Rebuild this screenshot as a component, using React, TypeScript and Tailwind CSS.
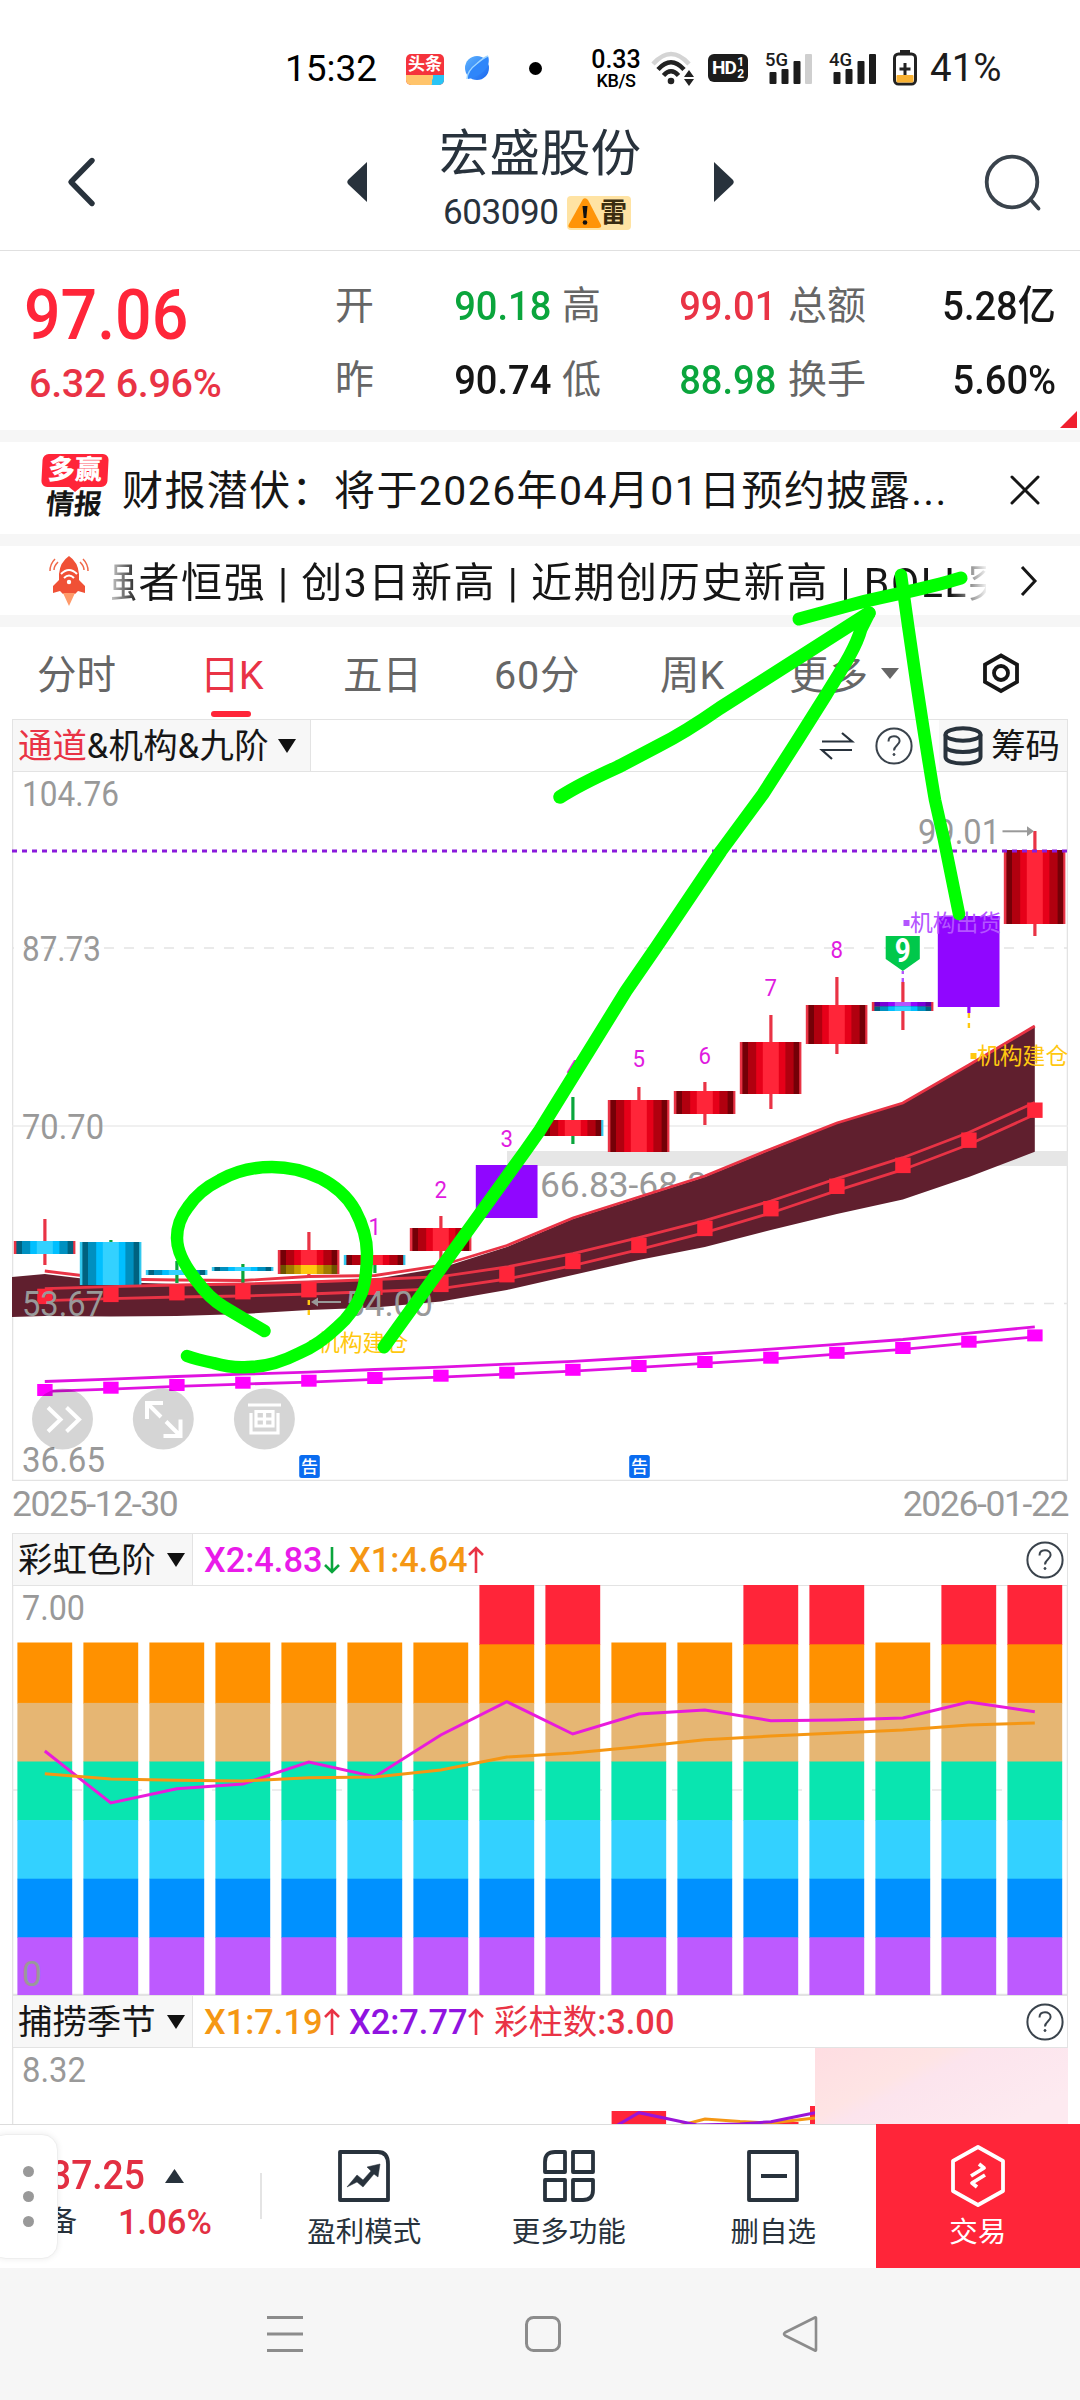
import React from "react";

const X0 = 44.8;
const STEP = 66;
const cx = (i: number) => X0 + STEP * i;
const pts = (ys: number[]) => ys.map((y, i) => `${cx(i)},${y}`).join(" ");

const RED = "#ff2539";
const INK = "#28323c";
const GREEN = "#0aa53c";

const reds = ["#740007", "#b1000f", "#e60019", "#ff2539"];
const cyans = ["#006280", "#0090c0", "#00bfff", "#33d1ff"];
const golds = ["#6e5200", "#a07a00", "#cc9c00", "#ffc810"];
const purples = ["#5a00a0", "#7800d8", "#9006ff", "#b455ff"];

type Candle = {
  top: number;
  bottom: number;
  hi: number;
  lo: number;
  wick: string;
  edge: string;
  shades?: string[];
  lower?: { from: number; shades: string[] };
  solid?: string;
};

const candles: Candle[] = [
  { top: 1241, bottom: 1254, hi: 1219, lo: 1265, wick: "#e93345", edge: "#e93345", shades: cyans },
  { top: 1242, bottom: 1285, hi: 1240, lo: 1285, wick: GREEN, edge: "#33c8ee", shades: cyans },
  { top: 1270, bottom: 1275, hi: 1261, lo: 1283, wick: GREEN, edge: "#33c8ee", shades: cyans },
  { top: 1267, bottom: 1271, hi: 1264, lo: 1283, wick: GREEN, edge: "#33c8ee", shades: cyans },
  { top: 1250, bottom: 1274, hi: 1232, lo: 1278, wick: "#e93345", edge: "#e93345", shades: reds, lower: { from: 1265, shades: golds } },
  { top: 1255, bottom: 1265, hi: 1255, lo: 1273, wick: GREEN, edge: "#33c8ee", shades: reds },
  { top: 1228, bottom: 1251, hi: 1216, lo: 1261, wick: "#e93345", edge: "#e93345", shades: reds },
  { top: 1165, bottom: 1218, hi: 1165, lo: 1218, wick: "#9006ff", edge: "#9006ff", solid: "#9006ff" },
  { top: 1120, bottom: 1136, hi: 1097, lo: 1144, wick: GREEN, edge: "#33c8ee", shades: reds },
  { top: 1100, bottom: 1152, hi: 1087, lo: 1152, wick: "#e93345", edge: "#e93345", shades: reds },
  { top: 1091, bottom: 1114, hi: 1082, lo: 1125, wick: "#e93345", edge: "#e93345", shades: reds },
  { top: 1042, bottom: 1094, hi: 1015, lo: 1109, wick: "#e93345", edge: "#e93345", shades: reds },
  { top: 1005, bottom: 1044, hi: 977, lo: 1054, wick: "#e93345", edge: "#e93345", shades: reds },
  { top: 1002, bottom: 1011, hi: 982, lo: 1030, wick: "#e93345", edge: "#e93345", shades: purples, lower: { from: 1006.5, shades: cyans } },
  { top: 916, bottom: 1007, hi: 916, lo: 1013, wick: "#9006ff", edge: "#9006ff", solid: "#9006ff" },
  { top: 850, bottom: 924, hi: 831, lo: 936, wick: "#e93345", edge: "#e93345", shades: reds },
];

function Shaded({ x, y, h, shades }: { x: number; y: number; h: number; shades: string[] }) {
  const inset = [0, 5.6, 13.8, 20.4];
  return (
    <g>
      {shades.map((c, i) => (
        <rect key={i} x={x - 28.4 + inset[i]} y={y} width={56.8 - inset[i] * 2} height={h} fill={c} />
      ))}
    </g>
  );
}

function CandleMark({ i, c }: { i: number; c: Candle }) {
  const x = cx(i);
  const split = c.lower ? c.lower.from : c.bottom;
  return (
    <g>
      <rect x={x - 1.5} y={c.hi} width={3.2} height={c.lo - c.hi} fill={c.wick} />
      <rect x={x - 31} y={c.top} width={61.6} height={c.bottom - c.top} fill={c.edge} />
      {c.solid && <rect x={x - 30.6} y={c.top} width={61} height={c.bottom - c.top} fill={c.solid} />}
      {c.shades && <Shaded x={x} y={c.top} h={split - c.top} shades={c.shades} />}
      {c.lower && <Shaded x={x} y={c.lower.from} h={c.bottom - c.lower.from} shades={c.lower.shades} />}
    </g>
  );
}

const bandTop = [1274, 1282, 1284, 1285, 1281, 1279, 1268, 1247, 1219, 1198, 1177, 1150, 1123.5, 1103, 1065, 1026];
const bandBottom = [1316, 1316.6, 1316, 1314, 1310, 1307.5, 1301.6, 1290, 1275, 1260, 1247, 1230, 1214, 1199.6, 1177, 1151.7];
const bandLine = [1271, 1279, 1280, 1280.5, 1276.5, 1275.5, 1265.5, 1245.5, 1218, 1197, 1176, 1149, 1123, 1103, 1065, 1026];
const mid = [1296.7, 1294.7, 1293, 1292, 1290, 1287.5, 1284.7, 1275, 1261.7, 1245.7, 1228.7, 1209, 1186.6, 1165.7, 1140.5, 1110.5];
const low = [1390, 1387.7, 1385, 1382.7, 1380.7, 1378, 1375.7, 1372.7, 1369.8, 1366, 1362, 1357.7, 1352.8, 1348, 1341.7, 1335.4];
const counts: [number, string, number][] = [
  [5, "1", 1226.5], [6, "2", 1189], [7, "3", 1138], [8, "4", 1068], [9, "5", 1058.7], [10, "6", 1055], [11, "7", 987.7], [12, "8", 949.5],
];

function Axis({ x, y, w, children }: { x: number; y: number; w: number; children: string }) {
  return (
    <text x={x} y={y + 12.7} fontSize={35.5} fill="#999" textLength={w} lengthAdjust="spacingAndGlyphs">
      {children}
    </text>
  );
}

function CandleChart() {
  return (
    <svg className="block h-[709px] w-[1056px] overflow-hidden" viewBox="12 772 1056 709">
      <path d="M12.5 772V1480.5H1067.5V772" fill="none" stroke="#e3e3e3" strokeWidth={1.6} />
      <path d="M12 948H1068M12 1303.5H1068" stroke="#e4e4e4" strokeWidth={1.4} strokeDasharray="10 10" strokeDashoffset={8} />
      <path d="M12 1126H1068" stroke="#ebebeb" strokeWidth={1.6} />
      <rect x={507} y={1151} width={561} height={15} fill="#e6e6e6" />
      <Axis x={540} y={1184.5} w={187}>66.83-68.38</Axis>

      <polygon points={`12,1277 ${pts(bandTop)} ${[...bandBottom].reverse().map((y, k) => `${cx(15 - k)},${y}`).join(" ")} 12,1317`} fill="#601f2e" />
      <polyline points={pts(bandLine)} fill="none" stroke="#e93345" strokeWidth={2.8} />

      {candles.map((c, i) => (
        <CandleMark key={i} i={i} c={c} />
      ))}

      <polyline points={pts(mid.map((y) => y - 8))} fill="none" stroke="#e93345" strokeWidth={2.8} />
      <polyline points={pts(mid.map((y) => y + 4))} fill="none" stroke="#e93345" strokeWidth={2.8} />
      {mid.map((y, i) => (
        <rect key={i} x={cx(i) - 7.6} y={y - 8} width={15.4} height={15.4} fill={RED} />
      ))}
      <polyline points={pts(low.map((y) => y - 8.5))} fill="none" stroke="#e012e0" strokeWidth={2.8} />
      <polyline points={pts(low.map((y) => y + 1.4))} fill="none" stroke="#e012e0" strokeWidth={2.8} />
      {low.map((y, i) => (
        <rect key={i} x={cx(i) - 7.6} y={y - 6} width={15.4} height={12} fill="#ff00ff" />
      ))}

      <path d="M12 851H1068" stroke="#8a1bdc" strokeWidth={3} strokeDasharray="5 5" />

      <g stroke="#ffc810" strokeWidth={2.4} strokeDasharray="5 5">
        <path d="M308.8 1300V1315M968.9 1013V1028" />
      </g>
      <path d="M902.8 971V974M902.8 978V982" stroke="#b455ff" strokeWidth={2.4} />
      <path d="M885.7 936H919.8V959L902.8 971L885.7 959Z" fill="#00c84b" />
      <text x={902.8} y={962} fontSize={34} fontWeight={700} fill="#fff" textAnchor="middle" textLength={16} lengthAdjust="spacingAndGlyphs">9</text>

      {counts.map(([i, t, y]) => (
        <text key={t} x={cx(i)} y={y + 8.5} fontSize={24} fill="#e01be0" textAnchor="middle" textLength={12.5} lengthAdjust="spacingAndGlyphs">
          {t}
        </text>
      ))}

      <rect x={309.5} y={1340} width={6} height={6} fill="#ffc810" />
      <text x={317} y={1350.5} fontSize={22.8} fill="#ffc810">机构建仓</text>
      <rect x={970.5} y={1053} width={6} height={6} fill="#ffc810" />
      <text x={977} y={1063.5} fontSize={22.8} fill="#ffc810">机构建仓</text>
      <rect x={903.5} y={920} width={6} height={6} fill="#b455ff" />
      <text x={910} y={931} fontSize={22.8} fill="#b455ff">机构出货</text>

      <Axis x={22} y={793.5} w={97}>104.76</Axis>
      <Axis x={22} y={948} w={79}>87.73</Axis>
      <Axis x={22} y={1126} w={82}>70.70</Axis>
      <Axis x={22} y={1303} w={82}>53.67</Axis>
      <Axis x={22} y={1459.5} w={83}>36.65</Axis>
      <Axis x={345} y={1303} w={88}>54.00</Axis>
      <Axis x={918} y={831.5} w={82}>99.01</Axis>
      <g stroke="#999" strokeWidth={2} fill="#999">
        <path d="M316 1302H341" />
        <path d="M311 1302L318 1297.5V1306.5Z" stroke="none" />
        <path d="M1002.5 831.3H1028" />
        <path d="M1034 831.3L1027 826.3V836.3Z" stroke="none" />
      </g>

      <g fill="#000" fillOpacity={0.165}>
        <circle cx={62.5} cy={1419} r={30.5} />
        <circle cx={163.3} cy={1419} r={30.5} />
        <circle cx={264.4} cy={1419} r={30.5} />
      </g>
      <g fill="none" stroke="#fff" strokeWidth={4}>
        <path d="M48 1407.5L60.5 1419.5L48 1431.5M66.5 1407.5L79 1419.5L66.5 1431.5" />
        <path d="M147 1419V1403H163M147 1403L161 1417M180.5 1419.5V1436H163.5M180.5 1436L166 1421.5" />
        <path d="M248 1405H281M251 1413V1433H278V1413M256 1411.5H273V1426H256ZM264.5 1411.5V1426M256 1419H273" strokeWidth={3.2} />
      </g>

      {[309.5, 639.5].map((x) => (
        <g key={x}>
          <rect x={x - 10.3} y={1455} width={20.6} height={23} rx={2.5} fill="#0a6cf0" />
          <text x={x} y={1473} fontSize={17} fill="#fff" textAnchor="middle" fontWeight={500}>告</text>
        </g>
      ))}
    </svg>
  );
}

const bands = ["#ff9100", "#e6b673", "#09e5b0", "#33d1ff", "#0091ff", "#bd5aff"];
const hot = [7, 8, 11, 12, 14, 15];
const x2 = [1751, 1803, 1788.7, 1784, 1762, 1776.7, 1735, 1701.7, 1734, 1714, 1710, 1720.7, 1720, 1718, 1702, 1711.7];
const x1 = [1773.7, 1779, 1780.3, 1781, 1777.7, 1777, 1770, 1757, 1753, 1746.7, 1739.7, 1736, 1733, 1730, 1725, 1723];

function RainbowChart() {
  return (
    <svg className="-mt-px block h-[410px] w-[1056px]" viewBox="12 1585 1056 410">
      <path d="M12.5 1586V1994.5H1067.5V1586" fill="none" stroke="#e3e3e3" strokeWidth={1.6} />
      <path d="M12 1790H1068" stroke="#e8e8e8" strokeWidth={1.6} strokeDasharray="10 10" />
      {x1.map((_, i) => (
        <g key={i}>
          {hot.includes(i) && <rect x={cx(i) - 27.4} y={1585} width={54.8} height={60} fill={RED} />}
          {bands.map((c, k) => (
            <rect key={c} x={cx(i) - 27.4} y={k === 0 && !hot.includes(i) ? 1642.5 : 1644.3 + k * 58.6} width={54.8} height={k === 5 ? 58 : k === 0 && !hot.includes(i) ? 61 : 59.2} fill={c} />
          ))}
        </g>
      ))}
      <polyline points={pts(x2)} fill="none" stroke="#e91bdc" strokeWidth={3} />
      <polyline points={pts(x1)} fill="none" stroke="#f59714" strokeWidth={3} />
      <Axis x={22} y={1607} w={63}>7.00</Axis>
      <Axis x={22} y={1973} w={20}>0</Axis>
    </svg>
  );
}

function FishingChart() {
  return (
    <svg className="block h-[76px] w-[1056px]" viewBox="12 2048 1056 76">
      <defs>
        <linearGradient id="pink" x1="0" y1="0" x2="1" y2="0.6">
          <stop offset="0" stopColor="#fedde2" />
          <stop offset="0.4" stopColor="#fee4e4" />
          <stop offset="0.5" stopColor="#fce4ed" />
          <stop offset="1" stopColor="#fdeaf0" />
        </linearGradient>
      </defs>
      <path d="M12.5 2047V2125" fill="none" stroke="#e3e3e3" strokeWidth={1.6} />
      <rect x={611.6} y={2111} width={54.5} height={14} fill={RED} />
      <rect x={744} y={2122} width={54.5} height={3} fill={RED} />
      <rect x={810} y={2106} width={5} height={19} fill={RED} />
      <path d="M678 2126L705 2119L740 2121.5L771 2123L815 2118" fill="none" stroke="#f59714" strokeWidth={3} />
      <path d="M616 2126L639 2112.7L697 2125L740 2124L771 2121.7L815 2112.7" fill="none" stroke="#9a14d8" strokeWidth={3} />
      <rect x={815} y={2047} width={253} height={78} fill="url(#pink)" />
      <Axis x={22} y={2069} w={64}>8.32</Axis>
    </svg>
  );
}

function Help() {
  return (
    <svg className="size-[38px]" viewBox="0 0 38 38" fill="none" stroke="#3a434c" strokeWidth={2}>
      <circle cx={19} cy={19} r={17.6} />
      <path d="M13.5 14.5C13.5 11 16 9.3 19 9.3S24.6 11 24.6 14C24.6 18 19 18.5 19 23.5" />
      <circle cx={19} cy={27.5} r={1} fill="#3a434c" strokeWidth={1} />
    </svg>
  );
}

function Caret({ className = "" }: { className?: string }) {
  return (
    <svg className={`h-[14px] w-[18px] ${className}`} viewBox="0 0 18 14">
      <path d="M0 0H18L9 14Z" fill="#111" />
    </svg>
  );
}

function Arrow({ up, color }: { up?: boolean; color: string }) {
  return (
    <svg className="h-[28px] w-[16px]" viewBox="0 0 16 28" fill="none" stroke={color} strokeWidth={2.6}>
      {up ? <path d="M8 27V2M1 9L8 2L15 9" /> : <path d="M8 1V26M1 19L8 26L15 19" />}
    </svg>
  );
}

function StatusBar() {
  return (
    <div className="flex h-[136px] items-center pl-[285px] text-black">
      <span className="w-[121px] text-[37px] leading-none">15:32</span>
      <div className="mt-[3px] flex h-[31px] w-[38px] flex-col overflow-hidden rounded-[5px] bg-[#f5333c]">
        <span className="text-center text-[17px] leading-[21px] font-bold text-white">头条</span>
        <div className="h-[10px] flex-1 bg-[linear-gradient(100deg,#ffc46b_68%,#29c4f5_69%)]" />
      </div>
      <svg className="ml-[20px] h-[30px] w-[28px]" viewBox="0 0 28 30">
        <defs>
          <linearGradient id="ball" x1="0" y1="0" x2="1" y2="1">
            <stop offset="0" stopColor="#5fb4ff" />
            <stop offset="1" stopColor="#1766f0" />
          </linearGradient>
        </defs>
        <circle cx={13} cy={15} r={12} fill="url(#ball)" />
        <path d="M4 26C3 22 6 17 12 12C17 7 21 4 24 3C27 11 22 22 4 26Z" fill="#2f86fa" />
        <path d="M3 26C3 21 7 15 13 10.5C17 7 21 4 24 3" fill="none" stroke="#9fd6ff" strokeWidth={1.4} />
      </svg>
      <div className="ml-[37px] size-[13px] rounded-full bg-black" />
      <div className="ml-[49px] flex w-[50px] flex-col items-center font-medium">
        <span className="text-[25px] leading-[24px]">0.33</span>
        <span className="text-[18px] leading-[17px] tracking-[-0.4px]">KB/S</span>
      </div>
      <svg className="ml-[10px] h-[36px] w-[46px]" viewBox="0 0 46 36" fill="none" strokeWidth={4.5}>
        <path d="M2 14Q20 -6 38 14" stroke="#d4d4d4" />
        <path d="M7 19.5Q20 5 33 19.5" stroke="#222" />
        <path d="M12.5 25.5Q20 17 27.5 25.5" stroke="#222" />
        <circle cx={20} cy={31} r={3.3} fill="#222" />
        <path d="M33 27L38 20L43 27ZM33 29L38 36L43 29Z" fill="#222" />
      </svg>
      <div className="ml-[11px] flex h-[28px] w-[40px] shrink-0 items-center justify-center rounded-[6px] bg-[#1c1c1c] text-white">
        <span className="text-[19px] leading-[28px] font-bold tracking-[-0.8px]">HD</span>
        <span className="ml-[1px] flex flex-col text-[12px] leading-[12px] font-bold"><span>1</span><span>2</span></span>
      </div>
      <Signal label="5G" last="#cfcfcf" className="ml-[17px]" />
      <Signal label="4G" last="#1c1c1c" className="ml-[17px]" />
      <svg className="ml-[17px] h-[36px] w-[24px]" viewBox="0 0 24 36">
        <rect x={7} y={0} width={10} height={5} fill="#222" />
        <rect x={1.5} y={4} width={21} height={30} rx={4} fill="#fff" stroke="#222" strokeWidth={3} />
        <rect x={3.5} y={25} width={17} height={7.5} rx={1} fill="#f9b233" />
        <path d="M12 13V25M6.5 19H17.5" stroke="#222" strokeWidth={3} />
      </svg>
      <span className="ml-[13px] text-[38.5px] leading-none text-[#1c1c1c]">41%</span>
    </div>
  );
}

function Signal({ label, last, className }: { label: string; last: string; className: string }) {
  return (
    <svg className={`h-[38px] w-[47px] overflow-visible ${className}`} viewBox="0 -2 47 38">
      <text x={0} y={15} fontSize={19} fontWeight={500} fill="#1c1c1c" textLength={23} lengthAdjust="spacingAndGlyphs">{label}</text>
      <g fill="#1c1c1c">
        <rect x={4.5} y={21} width={7} height={12} rx={1} />
        <rect x={16.5} y={18} width={7} height={15} rx={1} />
        <rect x={28.5} y={10} width={7} height={23} rx={1} />
        <rect x={40} y={3} width={7} height={30} rx={1} fill={last} />
      </g>
    </svg>
  );
}

function TitleBar() {
  return (
    <div className="flex h-[115px] items-start border-b border-[#e0e0e0] text-[#28323c]">
      <svg className="mt-[20px] ml-[66px] h-[52px] w-[32px]" viewBox="0 0 32 52" fill="none" stroke={INK} strokeWidth={5.4} strokeLinecap="round" strokeLinejoin="round">
        <path d="M26 4.5L5 26L26 47.5" />
      </svg>
      <svg className="mt-[26px] ml-[249px] h-[40px] w-[20px]" viewBox="0 0 20 40">
        <path d="M20 0V40L1.5 22.5Q-1 20 1.5 17.5Z" fill={INK} />
      </svg>
      <div className="-mt-[9px] ml-[72px] flex w-[203px] flex-col">
        <span className="text-[50.5px] leading-[54px] whitespace-nowrap">宏盛股份</span>
        <div className="mt-[15px] flex items-center pl-[4px]">
          <span className="w-[124px] text-[35px] leading-[34px] tracking-[-0.4px]">603090</span>
          <div className="flex h-[34px] w-[64px] items-center rounded-[4px] bg-[#ffe3a3]">
            <svg className="h-[30px] w-[35px]" viewBox="0 0 35 30">
              <path d="M16 1Q18.5 -1 21 2L34 27Q35 30 31 30H4Q0 30 2 26Z" fill="#ff9408" />
              <path d="M15.5 8H20.5L19.3 20H16.7Z" fill="#111" />
              <circle cx={18} cy={24.5} r={2.3} fill="#111" />
            </svg>
            <span className="-ml-[2px] text-[27px] leading-[34px] font-bold text-[#3a2c10]">雷</span>
          </div>
        </div>
      </div>
      <svg className="mt-[26px] ml-[72px] h-[40px] w-[20px]" viewBox="0 0 20 40">
        <path d="M0 0V40L18.5 22.5Q21 20 18.5 17.5Z" fill={INK} />
      </svg>
      <svg className="mt-[17px] ml-[250px] h-[60px] w-[60px]" viewBox="0 0 60 60" fill="none" stroke="#3a434c" strokeWidth={3.8} strokeLinecap="round">
        <circle cx={28} cy={29} r={25.3} />
        <path d="M47 47L54.5 55.5" />
      </svg>
    </div>
  );
}

function Stat({ label, value, tone, className }: { label: string; value: string; tone: string; className: string }) {
  return (
    <div className={`flex items-center justify-between ${className}`}>
      <span className="text-[39px] leading-[44px] whitespace-nowrap text-[#666]">{label}</span>
      <span className={`origin-right scale-x-[0.94] text-[40.5px] leading-[44px] font-medium whitespace-nowrap ${tone}`}>{value}</span>
    </div>
  );
}

function Quote() {
  return (
    <div className="flex h-[179px] overflow-hidden bg-white">
      <div className="flex w-[335px] flex-col pt-[29px] pl-[24px] font-medium">
        <span className="origin-left scale-x-[0.92] text-[70px] leading-[70px] text-[#ff2539]">97.06</span>
        <span className="mt-[12px] ml-[5px] text-[39.5px] leading-[44px] tracking-[-0.3px] whitespace-nowrap text-[#e93345]">6.32 6.96%</span>
      </div>
      <div className="flex flex-col gap-[30px] pt-[33px]">
        <div className="flex">
          <Stat label="开" value="90.18" tone="text-[#0aa53c]" className="w-[216px]" />
          <Stat label="高" value="99.01" tone="text-[#e93345]" className="ml-[11px] w-[214px]" />
          <Stat label="总额" value="5.28亿" tone="text-[#161616]" className="ml-[12px] w-[268px]" />
        </div>
        <div className="flex">
          <Stat label="昨" value="90.74" tone="text-[#161616]" className="w-[216px]" />
          <Stat label="低" value="88.98" tone="text-[#0aa53c]" className="ml-[11px] w-[214px]" />
          <Stat label="换手" value="5.60%" tone="text-[#161616]" className="ml-[12px] w-[268px]" />
        </div>
      </div>
      <svg className="mt-[160px] ml-[4px] size-[17px] shrink-0" viewBox="0 0 17 17">
        <path d="M17 0V17H0Z" fill="#f0202f" />
      </svg>
    </div>
  );
}

function NewsRow() {
  return (
    <div className="flex h-[92px] items-center bg-white">
      <div className="-mt-[6px] ml-[41px] flex w-[67px] flex-col items-center">
        <div className="flex h-[33px] w-[66px] -skew-x-3 items-center justify-center rounded-[6px] bg-[#ff2539] text-[27px] leading-[33px] font-black text-white">多赢</div>
        <svg className="h-[5px] w-[12px]" viewBox="0 0 12 5"><path d="M0 0H12L6 5Z" fill={RED} /></svg>
        <span className="-skew-x-6 text-[28px] leading-[25px] font-bold text-[#161616]">情报</span>
      </div>
      <span className="mt-[5px] ml-[14px] w-[860px] text-[41px] leading-[50px] tracking-[1.4px] whitespace-nowrap text-[#161616]">财报潜伏：将于2026年04月01日预约披露...</span>
      <svg className="mt-[4px] ml-[28px] size-[30px]" viewBox="0 0 30 30" stroke="#161616" strokeWidth={3} strokeLinecap="round">
        <path d="M2 2L28 28M28 2L2 28" />
      </svg>
    </div>
  );
}

function Ticker() {
  return (
    <div className="flex h-[69px] items-center bg-white">
      <svg className="ml-[48px] h-[50px] w-[42px]" viewBox="0 0 42 50">
        <g fill="none" stroke="#f0694a" strokeWidth={1.5}>
          <path d="M7 3Q2 8 2 15M10 6Q6 10 6 14M35 3Q40 8 40 15M32 6Q36 10 36 14" />
        </g>
        <path d="M21 0Q30 6 31 18V24L37 30V37L30 35L27 38H15L12 35L5 37V30L11 24V18Q12 6 21 0Z" fill="#f05136" />
        <path d="M15 37H27L21 50Z" fill="#ff9a6a" />
        <g fill="none" stroke="#fff" strokeWidth={2}>
          <path d="M13 18Q21 10 29 18M16 22Q21 17 26 22" />
        </g>
        <circle cx={21} cy={26} r={2.2} fill="#fff" />
      </svg>
      <div className="mt-[5px] ml-[22px] w-[874px] overflow-hidden [mask-image:linear-gradient(90deg,#0004,#000_3%,#000_96%,#0001)]">
        <span className="-ml-[16px] block text-[41px] leading-[60px] tracking-[1.55px] whitespace-nowrap text-[#161616]">
          强者恒强 | 创3日新高 | 近期创历史新高 | BOLL突
        </span>
      </div>
      <svg className="mt-[1px] ml-[34px] h-[32px] w-[18px]" viewBox="0 0 18 32" fill="none" stroke="#161616" strokeWidth={3}>
        <path d="M2 2L15 16L2 30" />
      </svg>
    </div>
  );
}

function Tabs() {
  return (
    <div className="flex h-[92px] items-center text-[39.5px] leading-none text-[#666]">
      <div className="flex items-center pt-[5px]">
        <span className="ml-[37px] w-[163px]">分时</span>
        <div className="relative w-[143px] text-[#e93345]">
          <span className="tracking-[-0.8px]">日K</span>
          <span className="absolute -bottom-[22px] left-[11px] h-[6px] w-[40px] rounded-full bg-[#ff2539]" />
        </div>
        <span className="w-[151px]">五日</span>
        <span className="w-[166px] tracking-[0.8px]">60分</span>
        <span className="w-[129px]">周K</span>
        <span className="w-[92px]">更多</span>
      </div>
      <svg className="h-[11px] w-[18px]" viewBox="0 0 18 11"><path d="M0 0H18L9 11Z" fill="#666" /></svg>
      <svg className="ml-[82px] h-[42px] w-[40px]" viewBox="0 0 40 42" fill="none" stroke="#161616" strokeWidth={3.8}>
        <path d="M20 3.5L36 12.5V30L20 39L4 30V12.5Z" />
        <circle cx={20} cy={21} r={7} />
      </svg>
    </div>
  );
}

function PanelHead({ children, width, right }: { children: React.ReactNode; width: string; right: React.ReactNode }) {
  const [label, ...rest] = React.Children.toArray(children);
  return (
    <div className="mx-[12px] flex h-[53px] items-stretch border border-[#e3e3e3] text-[34.4px] leading-none text-[#161616]">
      <div className={`flex items-center border-r border-[#e3e3e3] bg-[#f7f7f7] pt-[1px] pl-[5px] whitespace-nowrap ${width}`}>{label}</div>
      <div className="flex flex-1 items-center pt-[1px] pl-[11px] font-medium">{rest}</div>
      <div className="flex items-center">{right}</div>
    </div>
  );
}

function Action({ label, children }: { label: string; children: React.ReactNode }) {
  return (
    <div className="flex w-[204.5px] flex-col items-center pt-[21px] text-[#28323c]">
      <svg className="h-[60px] w-[60px]" viewBox="0 0 60 60" fill="none" stroke={INK} strokeWidth={3.8} strokeLinejoin="round">{children}</svg>
      <span className="mt-[11px] text-[28.5px] leading-[32px]">{label}</span>
    </div>
  );
}

function BottomBar() {
  return (
    <div className="relative flex h-[144px] border-t border-[#dcdcdc] bg-white">
      <div className="ml-[56px] flex w-[204px] flex-col overflow-hidden pt-[31px] font-medium text-[#e22f42]">
        <div className="flex items-center">
          <span className="-ml-[6px] w-[115px] origin-left scale-x-[0.93] text-[40px] leading-[39px]">37.25</span>
          <svg className="h-[14px] w-[19px]" viewBox="0 0 19 14"><path d="M9.5 0L19 14H0Z" fill={INK} /></svg>
        </div>
        <div className="mt-[8px] flex items-center">
          <span className="-ml-[8px] w-[70px] text-[29px] leading-[38px] font-normal text-[#28323c]">备</span>
          <span className="text-[34.5px] leading-[38px]">1.06%</span>
        </div>
      </div>
      <div className="mt-[48px] h-[46px] w-[2px] bg-[#e4e4e4]" />
      <Action label="盈利模式">
        <path d="M6 6H44Q54 6 54 18V54H6Z" />
        <path d="M13 41L23 29L29 34L37 25L33 21L46 18L44 31L40 28L29 41L23 36Z" fill={INK} strokeWidth={0.5} />
      </Action>
      <Action label="更多功能">
        <path d="M26 6V26H6V16Q6 6 16 6ZM34 6H54V26H34ZM6 34H26V54H6ZM34 34H54V44Q54 54 44 54H34Z" />
      </Action>
      <Action label="删自选">
        <path d="M6 6H54V54H6ZM18 30H44" />
      </Action>
      <div className="-mt-px flex flex-1 flex-col items-center bg-[#ff2539] pt-[20px] text-white">
        <svg className="h-[64px] w-[60px]" viewBox="0 0 60 64" fill="none" stroke="#fff" strokeWidth={3.8} strokeLinejoin="round">
          <path d="M30 3L55 17V47L30 61L5 47V17Z" />
          <path d="M23 32L36 24L31 20M37 31L24 39L29 43" />
        </svg>
        <span className="mt-[9px] text-[28.5px] leading-[32px]">交易</span>
      </div>
      <div className="absolute top-[9px] -left-[10px] flex h-[125px] w-[68px] flex-col items-center justify-center gap-[14px] rounded-[16px] border border-[#eee] bg-white pl-[9px] shadow-[0_0_6px_rgba(0,0,0,0.08)]">
        <span className="size-[11px] rounded-full bg-[#999]" />
        <span className="size-[11px] rounded-full bg-[#999]" />
        <span className="size-[11px] rounded-full bg-[#999]" />
      </div>
    </div>
  );
}

function SystemNav() {
  return (
    <div className="flex h-[132px] items-start bg-[#f6f6f6] pt-[47px]">
      <svg className="ml-[266px] h-[38px] w-[38px]" viewBox="0 0 38 38" stroke="#8c8c8c" strokeWidth={3}>
        <path d="M1 2.5H37M1 19H37M1 35.5H37" />
      </svg>
      <svg className="ml-[220px] h-[38px] w-[38px]" viewBox="0 0 38 38" fill="none" stroke="#8c8c8c" strokeWidth={3}>
        <rect x={2.5} y={2.5} width={33} height={33} rx={7} />
      </svg>
      <svg className="ml-[220px] h-[38px] w-[38px]" viewBox="0 0 38 38" fill="none" stroke="#8c8c8c" strokeWidth={2.6} strokeLinejoin="round">
        <path d="M34 3V35Q34 36 33 35.5L3 20.5Q1 19 3 17.5L33 2.5Q34 2 34 3Z" />
      </svg>
    </div>
  );
}

function Scribbles() {
  return (
    <svg className="pointer-events-none absolute inset-0 h-[2400px] w-[1080px]" viewBox="0 0 1080 2400" fill="none" stroke="#0f0" strokeWidth={12.5} strokeLinecap="round" strokeLinejoin="round">
      <path d="M264.5 1331L224 1307C212 1300 204 1291 196 1280C184 1265 177 1252 177 1238C177 1226 181 1216 188 1207C196 1195 206 1187 220 1180C236 1171 254 1167 272 1167C290 1167 305 1171 320 1178C336 1186 347 1196 355 1210C363 1225 367 1238 367 1253C367 1268 366 1281 361.6 1293C356 1307 348 1318 337.5 1327C326 1338 314 1347 299.6 1353C282 1362 266 1367 248 1367C236 1368 224 1366 213.5 1363C204 1361 195 1359 187 1356" />
      <path d="M384 1347L526 1150L540 1130L626 991L657 946L690 897L721 851L763 794L797 741L826 695C840 672 856 648 861 629L869 613" strokeWidth={13} />
      <path d="M560 797C580 784 598 776 620 766L658 746C680 735 700 722 720 708L869 613" strokeWidth={13.5} />
      <path d="M799 619L858 603C890 595 926 589 961 578" strokeWidth={13} />
      <path d="M901 575L908 625L916 680C922 720 929 765 935 800L944 840L959 914" />
    </svg>
  );
}

export default function App() {
  return (
    <div className="relative h-[2400px] w-[1080px] overflow-hidden bg-white font-['Roboto','Noto_Sans_CJK_SC',sans-serif]">
      <StatusBar />
      <TitleBar />
      <Quote />
      <div className="h-[12px] bg-[#f6f6f6]" />
      <NewsRow />
      <div className="h-[12px] bg-[#f6f6f6]" />
      <Ticker />
      <div className="h-[12px] bg-[#f6f6f6]" />
      <Tabs />
      <PanelHead
        width="w-[298px]"
        right={
          <>
            <svg className="mr-[20px] h-[30px] w-[36px]" viewBox="0 0 36 30" fill="none" stroke={INK} strokeWidth={2.2}>
              <path d="M3 10.5H33L23 2M33 19H3L13 28" />
            </svg>
            <Help />
            <div className="ml-[26px] flex h-full items-center bg-[#f7f7f7] pr-[7px] pl-[4px]">
              <svg className="h-[40px] w-[40px]" viewBox="0 0 40 40" fill="none" stroke={INK} strokeWidth={4}>
                <ellipse cx={20} cy={8.5} rx={17.5} ry={6.3} />
                <path d="M2.5 8.5V31C2.5 39.5 37.5 39.5 37.5 31V8.5M2.5 20C2.5 28 37.5 28 37.5 20" />
              </svg>
              <span className="ml-[8px] pt-[1px]">筹码</span>
            </div>
          </>
        }
      >
        <div className="flex items-center">
          <span className="text-[#e93345]">通道</span>
          <span className="tracking-[0.3px]">&amp;机构&amp;九阶</span>
          <Caret className="ml-[9px]" />
        </div>
      </PanelHead>
      <div className="mx-[12px]">
        <CandleChart />
      </div>
      <div className="flex h-[52px] items-center justify-between px-[12px] pb-[4px] text-[35.5px] leading-none tracking-[-1.4px] text-[#999]">
        <span>2025-12-30</span>
        <span>2026-01-22</span>
      </div>
      <PanelHead width="w-[180px]" right={<span className="mr-[3px] flex"><Help /></span>}>
        <div className="flex items-center">
          彩虹色阶
          <Caret className="ml-[11px]" />
        </div>
        <span className="w-[120px] text-[#e91be9]">X2:4.83</span>
        <Arrow color={GREEN} />
        <span className="ml-[9px] w-[119px] text-[#f59714]">X1:4.64</span>
        <Arrow up color="#e93345" />
      </PanelHead>
      <div className="mx-[12px]">
        <RainbowChart />
      </div>
      <PanelHead width="w-[180px]" right={<span className="mr-[3px] flex"><Help /></span>}>
        <div className="flex items-center">
          捕捞季节
          <Caret className="ml-[11px]" />
        </div>
        <span className="w-[120px] text-[#f59714]">X1:7.19</span>
        <Arrow up color="#e93345" />
        <span className="ml-[9px] w-[119px] text-[#9013e0]">X2:7.77</span>
        <Arrow up color="#e93345" />
        <span className="ml-[10px] text-[#e93345]"><span className="font-normal">彩柱数</span>:3.00</span>
      </PanelHead>
      <div className="mx-[12px]">
        <FishingChart />
      </div>
      <BottomBar />
      <SystemNav />
      <Scribbles />
    </div>
  );
}
